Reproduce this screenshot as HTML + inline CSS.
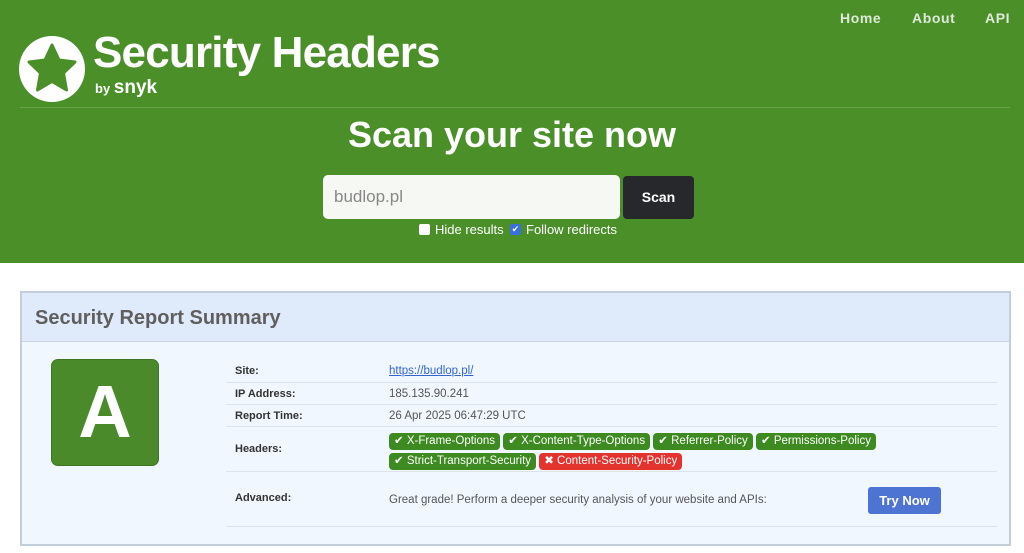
<!DOCTYPE html>
<html><head><meta charset="utf-8"><style>
*{box-sizing:border-box;margin:0;padding:0}
body{width:1024px;height:553px;overflow:hidden;background:#fff;font-family:"Liberation Sans",sans-serif;position:relative}
.hdr{position:absolute;left:0;top:0;width:1024px;height:263px;background:#4b8f29}
.nav{position:absolute;top:10px;font-size:14px;font-weight:bold;color:#dfe9d8;letter-spacing:0.6px}
.title{position:absolute;left:93px;top:28px;font-weight:bold;font-size:44px;color:#fff;letter-spacing:-0.8px}
.by{position:absolute;left:95px;top:77px;color:#fff;font-size:13px;font-weight:bold}
.by b{font-size:19px}
.line{position:absolute;left:20px;top:107px;width:990px;height:1px;background:#6aa24d}
.scan{position:absolute;left:0;width:1024px;top:114px;text-align:center;color:#fff;font-weight:bold;font-size:36px}
.inp{position:absolute;left:323px;top:175px;width:297px;height:44px;background:#f6f8f3;border-radius:5px;color:#888;font-size:17px;padding:12px 0 0 11px}
.btn{position:absolute;left:623px;top:176px;width:71px;height:43px;background:#27282c;border-radius:4px;color:#fff;font-weight:bold;font-size:14px;text-align:center;line-height:43px}
.chk{position:absolute;top:222px;font-size:13px;color:#fff}
.box{position:absolute;top:224px;width:11px;height:11px;background:#fff;border-radius:2px}
.panel{position:absolute;left:20px;top:291px;width:991px;height:255px;border:2px solid #c2cfda;background:#f0f7fe}
.ph{height:49px;background:#dfebfa;border-bottom:1px solid #c9d6e2;font-weight:bold;font-size:20px;color:#5f5f5f;padding:14px 0 0 13px}
.grade{position:absolute;left:29px;top:66px;width:108px;height:107px;background:#4b8a2a;border:1px solid #3e7422;border-radius:7px;color:#fff;font-weight:bold;font-size:74px;text-align:center;line-height:104px}
.row{position:absolute;left:204px;width:771px;border-bottom:1px solid #dde3e8;font-size:11px;color:#333}
.row .l{position:absolute;left:9px;font-weight:bold}
.row .v{position:absolute;left:163px;color:#555;font-size:11.5px}
.tag{display:inline-block;height:17px;line-height:17px;padding:0 5px;border-radius:4px;background:#3d8a20;color:#fff;font-size:11.5px}
.tag.r{background:#e2332f}
.try{position:absolute;left:846px;top:194px;width:73px;height:27px;background:#4d74d3;border-radius:3px;color:#fff;font-weight:bold;font-size:13px;text-align:center;line-height:27px}
</style></head><body>
<div class="hdr">
<div class="nav" style="left:840px">Home</div>
<div class="nav" style="left:912px">About</div>
<div class="nav" style="left:985px">API</div>
<svg style="position:absolute;left:19px;top:36px" width="66" height="66" viewBox="0 0 66 66"><circle cx="33" cy="33" r="33" fill="#fff"/><path d="M33 9 L40 24 L56 26 L44.5 37 L47.5 54 L33 45.5 L18.5 54 L21.5 37 L10 26 L26 24 Z" fill="#4b8f29" stroke="#4b8f29" stroke-width="3" stroke-linejoin="round"/></svg>
<div class="title">Security Headers</div>
<div class="by">by <b>snyk</b></div>
<div class="line"></div>
<div class="scan">Scan your site now</div>
<div class="inp">budlop.pl</div>
<div class="btn">Scan</div>
<div class="box" style="left:419px"></div>
<div class="chk" style="left:435px">Hide results</div>
<div class="box" style="left:510px;background:#3a6fe0;color:#fff;font-size:9px;line-height:11px;text-align:center">✔</div>
<div class="chk" style="left:526px">Follow redirects</div>
</div>
<div class="panel">
<div class="ph">Security Report Summary</div>
<div class="grade">A</div>
<div class="row" style="top:66px;height:24px"><span class="l" style="top:6px">Site:</span><span class="v" style="top:6px;color:#3366cc;text-decoration:underline">https://budlop.pl/</span></div>
<div class="row" style="top:90px;height:22px"><span class="l" style="top:5px">IP Address:</span><span class="v" style="top:5px">185.135.90.241</span></div>
<div class="row" style="top:112px;height:22px"><span class="l" style="top:5px">Report Time:</span><span class="v" style="top:5px">26 Apr 2025 06:47:29 UTC</span></div>
<div class="row" style="top:134px;height:45px"><span class="l" style="top:16px">Headers:</span><span class="v" style="top:4px;width:600px;line-height:20px"><span class="tag">✔ X-Frame-Options</span> <span class="tag">✔ X-Content-Type-Options</span> <span class="tag">✔ Referrer-Policy</span> <span class="tag">✔ Permissions-Policy</span><br><span class="tag">✔ Strict-Transport-Security</span> <span class="tag r">✖ Content-Security-Policy</span></span></div>
<div class="row" style="top:179px;height:55px"><span class="l" style="top:20px">Advanced:</span><span class="v" style="top:22px">Great grade! Perform a deeper security analysis of your website and APIs:</span></div>
<div class="try">Try Now</div>
</div>
</body></html>
